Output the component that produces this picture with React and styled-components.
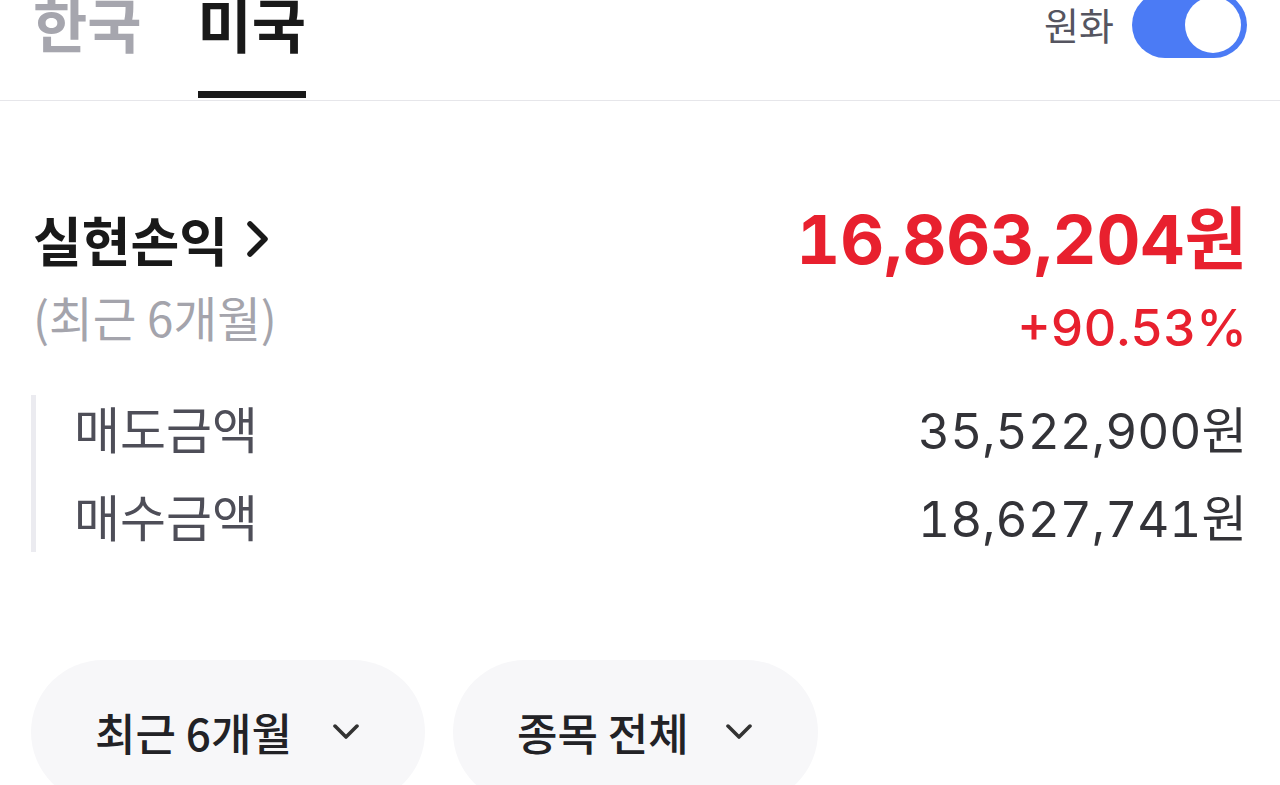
import React from "react";
import styled, { createGlobalStyle } from "styled-components";

const Global = createGlobalStyle`
  html, body { margin: 0; padding: 0; background: #ffffff; }
  body { font-family: Inter, "Noto Sans CJK KR", sans-serif; overflow: hidden; }
  * { box-sizing: border-box; }
`;

const Page = styled.div`
  width: 1280px;
  height: 785px;
  overflow: hidden;
  background: #ffffff;
`;

const Header = styled.header`
  height: 101px;
  display: flex;
  justify-content: space-between;
  align-items: flex-start;
  padding: 0 33px;
  border-bottom: 1px solid #e6e6ea;
`;

const Tabs = styled.nav`
  display: flex;
  gap: 56px;
`;

const Tab = styled.div`
  height: 98px;
  font-family: "Noto Sans CJK KR", sans-serif;
  font-size: 59px;
  font-weight: 700;
  line-height: 46px;
  color: ${(p) => (p.$active ? "#191919" : "#a6a6ae")};
  border-bottom: 7px solid ${(p) => (p.$active ? "#191919" : "transparent")};
`;

const Right = styled.div`
  height: 48px;
  display: flex;
  align-items: center;
  gap: 18px;
`;

const ToggleLabel = styled.span`
  font-family: "Noto Sans CJK KR", sans-serif;
  font-size: 38px;
  color: #555560;
  line-height: 1;
`;

const Track = styled.div`
  width: 115px;
  height: 66px;
  margin-top: 2px;
  border-radius: 33px;
  background: #4b7bf5;
  display: flex;
  align-items: center;
  justify-content: ${(p) => (p.$on ? "flex-end" : "flex-start")};
  padding: 0 6px;
`;

const Knob = styled.div`
  width: 56px;
  height: 56px;
  border-radius: 50%;
  background: #ffffff;
`;

const Main = styled.main`
  padding: 0 33px;
`;

const Summary = styled.section`
  display: flex;
  justify-content: space-between;
  align-items: flex-start;
  padding-top: 102px;
`;

const SummaryLeft = styled.div`
  display: flex;
  flex-direction: column;
`;

const Title = styled.div`
  display: flex;
  align-items: center;
  gap: 18px;
  font-family: "Noto Sans CJK KR", sans-serif;
  font-size: 53px;
  font-weight: 700;
  color: #191919;
  line-height: 72px;
`;

const Sub = styled.div`
  font-family: "Noto Sans CJK KR", sans-serif;
  font-size: 47.5px;
  color: #a4a4ac;
  line-height: 60px;
  margin-top: 12px;
`;

const SummaryRight = styled.div`
  display: flex;
  flex-direction: column;
  align-items: flex-end;
`;

const Amount = styled.div`
  font-family: Inter, "Noto Sans CJK KR", sans-serif;
  font-size: 68px;
  font-weight: 700;
  color: #e8202e;
  line-height: 72px;
  font-variant-numeric: tabular-nums;
`;

const Rate = styled.div`
  font-family: Inter, "Noto Sans CJK KR", sans-serif;
  font-size: 51px;
  font-weight: 500;
  color: #e8202e;
  line-height: 60px;
  margin-top: 23px;
  font-variant-numeric: tabular-nums;
`;

const Breakdown = styled.section`
  margin-top: 37px;
  border-left: 5px solid #ebebf0;
  padding: 2px 0 7px 38px;
  display: flex;
  flex-direction: column;
  gap: 28px;
  margin-left: -2px;
`;

const Row = styled.div`
  display: flex;
  justify-content: space-between;
  align-items: center;
  height: 60px;
`;

const RowLabel = styled.span`
  font-family: "Noto Sans CJK KR", sans-serif;
  font-size: 50px;
  color: #4e4e58;
`;

const RowValue = styled.span`
  font-family: Inter, "Noto Sans CJK KR", sans-serif;
  font-size: 49.5px;
  color: #333338;
  font-variant-numeric: tabular-nums;
`;

const Filters = styled.div`
  display: flex;
  gap: 28px;
  margin-top: 108px;
  margin-left: -2px;
`;

const Pill = styled.button`
  height: 144px;
  width: ${(p) => p.$w}px;
  border: none;
  border-radius: 72px;
  background: #f7f7f9;
  display: flex;
  align-items: center;
  justify-content: space-between;
  padding: 0 66px 0 64px;
  font-family: "Noto Sans CJK KR", sans-serif;
  font-size: 44px;
  font-weight: 500;
  color: #222226;
  cursor: pointer;
`;

const Chevron = ({ dir = "down", size = 26, stroke = 3.6, color = "#333" }) =>
  dir === "down" ? (
    <svg width={size} height={size * 0.62} viewBox="0 0 26 16" fill="none">
      <path d="M2 2 L13 13 L24 2" stroke={color} strokeWidth={stroke} strokeLinecap="round" strokeLinejoin="round" />
    </svg>
  ) : (
    <svg width="24" height="38" viewBox="0 0 24 38" fill="none">
      <path d="M4 4 L19 19 L4 34" stroke={color} strokeWidth={stroke} strokeLinecap="round" strokeLinejoin="round" />
    </svg>
  );

export default function App() {
  return (
    <Page>
      <Global />
      <Header>
        <Tabs>
          <Tab>한국</Tab>
          <Tab $active>미국</Tab>
        </Tabs>
        <Right>
          <ToggleLabel>원화</ToggleLabel>
          <Track $on>
            <Knob />
          </Track>
        </Right>
      </Header>
      <Main>
        <Summary>
          <SummaryLeft>
            <Title>
              실현손익
              <Chevron dir="right" stroke={5.5} color="#191919" />
            </Title>
            <Sub>(최근 6개월)</Sub>
          </SummaryLeft>
          <SummaryRight>
            <Amount>16,863,204원</Amount>
            <Rate>+90.53%</Rate>
          </SummaryRight>
        </Summary>
        <Breakdown>
          <Row>
            <RowLabel>매도금액</RowLabel>
            <RowValue>35,522,900원</RowValue>
          </Row>
          <Row>
            <RowLabel>매수금액</RowLabel>
            <RowValue>18,627,741원</RowValue>
          </Row>
        </Breakdown>
        <Filters>
          <Pill $w={394}>
            최근 6개월
            <Chevron />
          </Pill>
          <Pill $w={365}>
            종목 전체
            <Chevron />
          </Pill>
        </Filters>
      </Main>
    </Page>
  );
}
